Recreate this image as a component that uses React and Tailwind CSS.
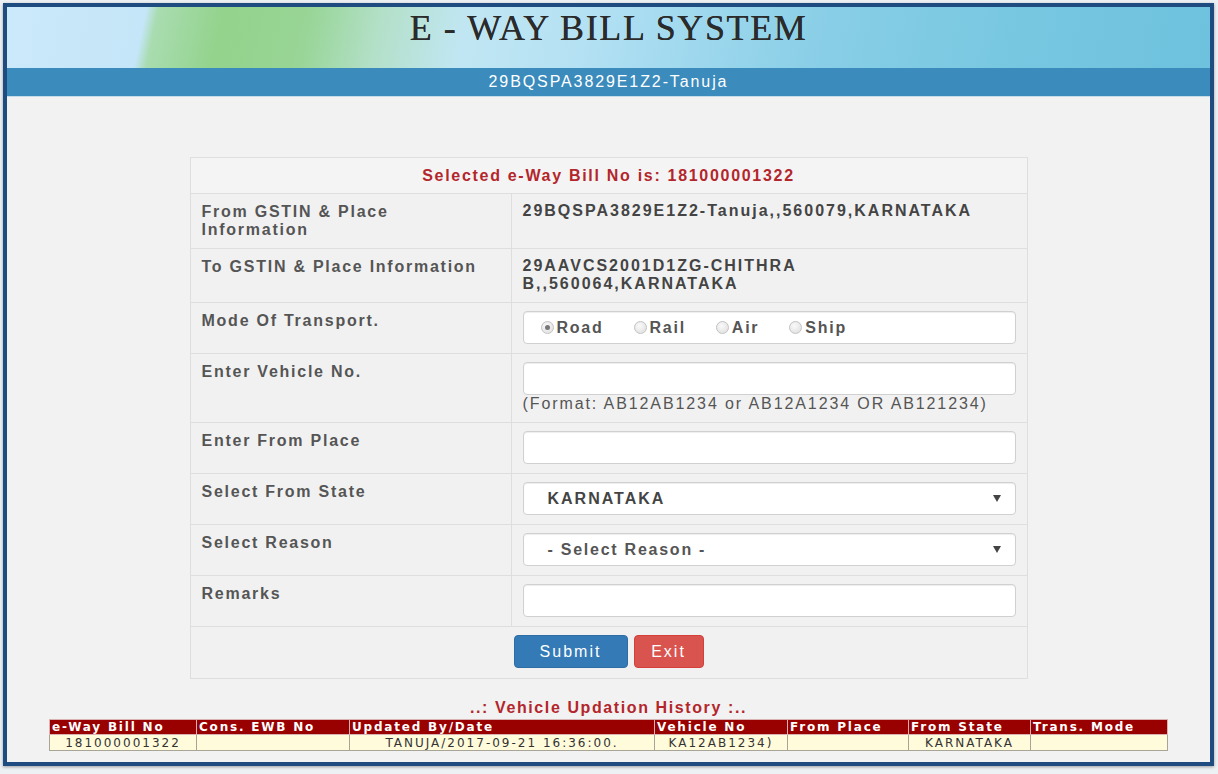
import React from 'react'

const label = 'font-bold text-[16px] leading-[18px] tracking-[1.75px] text-[#555]'
const value = 'font-bold text-[16px] leading-[18px] tracking-[2px] text-[#444]'
const cellL = 'border border-[#dedede] align-top pl-[11px] pr-[8px] pt-[9px] pb-[9px]'
const cellR = 'border border-[#dedede] align-top pl-[11px] pr-[11px] pt-[8px] pb-[9px]'

const Field = ({ children, className = '' }) => (
  <div className={`h-[33px] w-full bg-white border border-[#d0d0d0] rounded-[4px] shadow-[inset_0_1px_1px_rgba(0,0,0,0.075)] flex items-center ${className}`}>
    {children}
  </div>
)

const Caret = () => (
  <svg width="8" height="7" viewBox="0 0 8 7" className="ml-auto mr-[14px]">
    <path d="M0 0h8L4 7z" fill="#444" />
  </svg>
)

const Radio = ({ checked, text }) => (
  <label className="flex items-center">
    <span className="w-[13px] h-[13px] rounded-full border border-[#c4c4c4] bg-[radial-gradient(circle_at_40%_35%,#fafafa,#dcdcdc)] flex items-center justify-center">
      {checked && <span className="w-[5px] h-[5px] rounded-full bg-[#777]"></span>}
    </span>
    <span className={`ml-[3px] ${label}`}>{text}</span>
  </label>
)

const history = {
  cols: [
    ['e-Way Bill No', 'w-[147px]'],
    ['Cons. EWB No', 'w-[153px]'],
    ['Updated By/Date', 'w-[305px]'],
    ['Vehicle No', 'w-[133px]'],
    ['From Place', 'w-[121px]'],
    ['From State', 'w-[122px]'],
    ['Trans. Mode', 'w-[137px]'],
  ],
  row: ['181000001322', '', 'TANUJA/2017-09-21 16:36:00.', 'KA12AB1234)', '', 'KARNATAKA', ''],
}

export default function App() {
  return (
    <div className="w-[1218px] h-[774px] bg-[#eef1f4] pt-[3px] pl-[3px] pr-[4px] pb-[8px] font-['Liberation_Sans',Arial,sans-serif]">
      <div className="h-full border-4 border-[#1f4c80] flex flex-col shadow-[0_1px_3px_rgba(0,0,0,0.35)]">
        {/* banner */}
        <div className="h-[61px] shrink-0 flex justify-center pt-[3px] bg-[linear-gradient(102deg,#cbe9fa_0%,#c5e6f8_11.5%,#a9dcb0_12.5%,#93d38c_18%,#98d596_25%,#b3e0c8_31%,#c1e6f3_38%,#b4e1f3_48%,#9fd8ee_57%,#88cee6_68%,#77c7e1_84%,#6ec2dd_100%)]">
          <h1 className="font-['Liberation_Serif',serif] text-[36px] leading-[36px] tracking-[1.6px] text-[#2b2b2b] [text-shadow:0_0_0.6px_#2b2b2b]">
            E - WAY BILL SYSTEM
          </h1>
        </div>
        <div className="h-[29px] shrink-0 bg-[#3b8bbc] border-b border-[#c5dbe8] flex items-center justify-center text-white text-[16px] tracking-[1.9px]">
          29BQSPA3829E1Z2-Tanuja
        </div>

        <div className="flex-1 bg-[#f2f2f2] pt-[60px]">
          <table className="w-[838px] mx-auto table-fixed border-collapse border border-[#dedede] bg-[#f1f1f1]">
            <colgroup>
              <col className="w-[321px]" />
              <col />
            </colgroup>
            <tbody>
              <tr>
                <td colSpan={2} className="border border-[#dedede] pt-[9px] pb-[8px] text-center font-bold text-[16px] leading-[18px] tracking-[1.7px] text-[#b3262b] bg-[#f4f4f4]">
                  Selected e-Way Bill No is: 181000001322
                </td>
              </tr>
              <tr>
                <td className={`${cellL} ${label}`}>
                  From GSTIN &amp; Place
                  <br />
                  Information
                </td>
                <td className={`${cellR} ${value}`}>29BQSPA3829E1Z2-Tanuja,,560079,KARNATAKA</td>
              </tr>
              <tr>
                <td className={`${cellL} ${label}`}>To GSTIN &amp; Place Information</td>
                <td className={`${cellR} ${value}`}>
                  29AAVCS2001D1ZG-CHITHRA
                  <br />
                  B,,560064,KARNATAKA
                </td>
              </tr>
              <tr>
                <td className={`${cellL} ${label}`}>Mode Of Transport.</td>
                <td className={cellR}>
                  <Field className="pl-[17px] gap-[30px]">
                    <Radio checked text="Road" />
                    <Radio text="Rail" />
                    <Radio text="Air" />
                    <Radio text="Ship" />
                  </Field>
                </td>
              </tr>
              <tr>
                <td className={`${cellL} ${label}`}>Enter Vehicle No.</td>
                <td className={cellR}>
                  <Field />
                  <div className="text-[16px] leading-[18px] tracking-[1.9px] text-[#555]">
                    (Format: AB12AB1234 or AB12A1234 OR AB121234)
                  </div>
                </td>
              </tr>
              <tr>
                <td className={`${cellL} ${label}`}>Enter From Place</td>
                <td className={cellR}>
                  <Field />
                </td>
              </tr>
              <tr>
                <td className={`${cellL} ${label}`}>Select From State</td>
                <td className={cellR}>
                  <Field className="pl-[24px]">
                    <span className={value}>KARNATAKA</span>
                    <Caret />
                  </Field>
                </td>
              </tr>
              <tr>
                <td className={`${cellL} ${label}`}>Select Reason</td>
                <td className={cellR}>
                  <Field className="pl-[24px]">
                    <span className={label}>- Select Reason -</span>
                    <Caret />
                  </Field>
                </td>
              </tr>
              <tr>
                <td className={`${cellL} ${label}`}>Remarks</td>
                <td className={cellR}>
                  <Field />
                </td>
              </tr>
              <tr>
                <td colSpan={2} className="border border-[#dedede] pt-[8px] pb-[10px]">
                  <div className="flex justify-center gap-[6px]">
                    <button className="w-[114px] h-[33px] rounded-[4px] bg-[#337ab7] border border-[#2e6da4] text-white text-[16px] tracking-[2px]">
                      Submit
                    </button>
                    <button className="w-[70px] h-[33px] rounded-[4px] bg-[#d9534f] border border-[#d43f3a] text-white text-[16px] tracking-[2px]">
                      Exit
                    </button>
                  </div>
                </td>
              </tr>
            </tbody>
          </table>

          <div className="mt-[20px] text-center font-bold text-[16px] leading-[18px] tracking-[1.6px] text-[#b3262b]">
            ..: Vehicle Updation History :..
          </div>
          <table className="mt-[2px] mx-auto w-[1118px] table-fixed border-collapse font-['DejaVu_Sans',Verdana,sans-serif] text-[12px] leading-[14px]">
            <colgroup>
              {history.cols.map(([, w]) => (
                <col key={w} className={w} />
              ))}
            </colgroup>
            <thead>
              <tr>
                {history.cols.map(([name]) => (
                  <th key={name} className="bg-[#990000] border border-[#d9b3b3] text-white font-bold text-left px-[2px] tracking-[1.8px] whitespace-nowrap overflow-hidden">
                    {name}
                  </th>
                ))}
              </tr>
            </thead>
            <tbody>
              <tr>
                {history.row.map((c, i) => (
                  <td key={i} className="bg-[#fffbdb] border border-[#a8a596] text-center text-[#333] tracking-[2px] h-[16px] whitespace-nowrap">
                    {c}
                  </td>
                ))}
              </tr>
            </tbody>
          </table>
        </div>
      </div>
    </div>
  )
}
